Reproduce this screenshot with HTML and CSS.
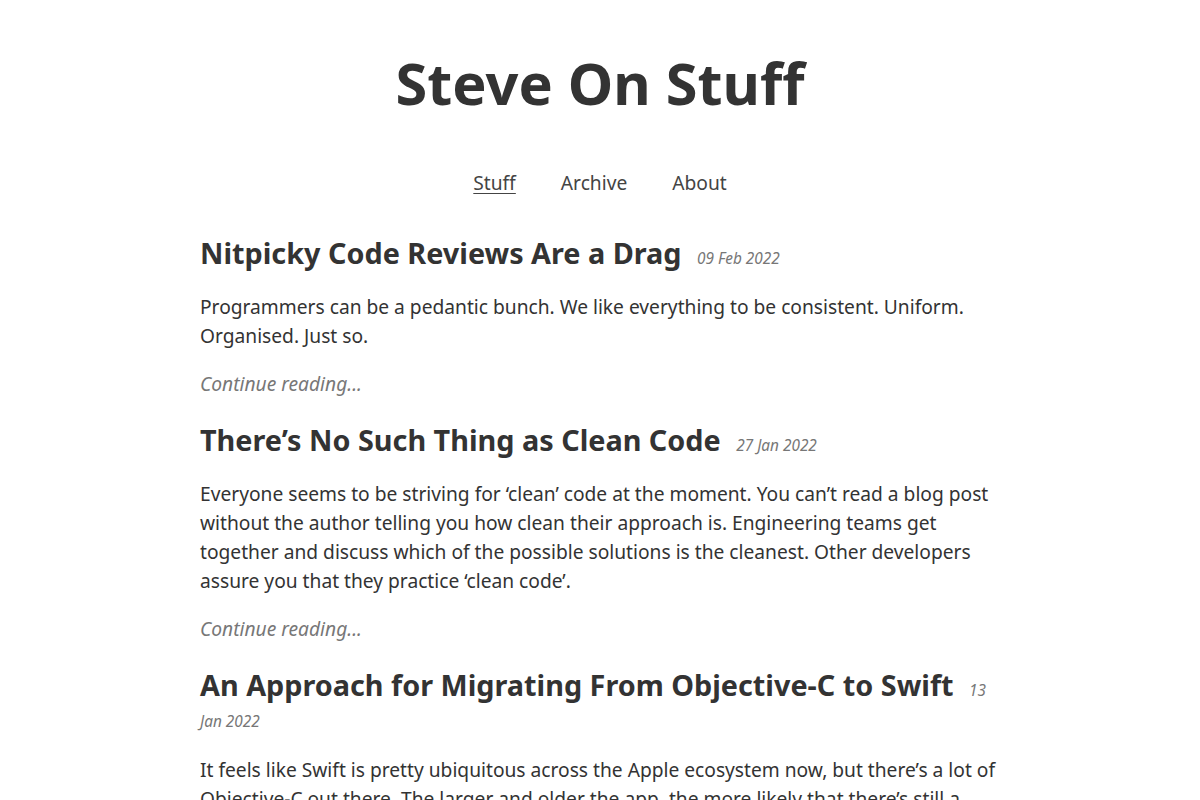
FILE: index.html
```html
<!DOCTYPE html>
<html lang="en">
<head>
<meta charset="utf-8">
<title>Steve On Stuff</title>
<link rel="stylesheet" href="styles.css">
</head>
<body>
<header class="site-header">
  <h1 class="site-title">Steve On Stuff</h1>
  <nav class="site-nav">
    <a class="nav-link current" href="#">Stuff</a>
    <a class="nav-link" href="#">Archive</a>
    <a class="nav-link" href="#">About</a>
  </nav>
</header>
<main class="posts">
  <article class="post">
    <h2 class="post-title">Nitpicky Code Reviews Are a Drag <span class="post-date">09 Feb 2022</span></h2>
    <p class="post-excerpt">Programmers can be a pedantic bunch. We like everything to be consistent. Uniform. Organised. Just so.</p>
    <p class="post-more"><a href="#">Continue reading...</a></p>
  </article>
  <article class="post">
    <h2 class="post-title">There’s No Such Thing as Clean Code <span class="post-date">27 Jan 2022</span></h2>
    <p class="post-excerpt">Everyone seems to be striving for ‘clean’ code at the moment. You can’t read a blog post without the author telling you how clean their approach is. Engineering teams get together and discuss which of the possible solutions is the cleanest. Other developers assure you that they practice ‘clean code’.</p>
    <p class="post-more"><a href="#">Continue reading...</a></p>
  </article>
  <article class="post">
    <h2 class="post-title">An Approach for Migrating From Objective-C to Swift <span class="post-date">13 Jan 2022</span></h2>
    <p class="post-excerpt">It feels like Swift is pretty ubiquitous across the Apple ecosystem now, but there’s a lot of Objective-C out there. The larger and older the app, the more likely that there’s still a significant amount of Objective-C code in the codebase.</p>
    <p class="post-more"><a href="#">Continue reading...</a></p>
  </article>
</main>
</body>
</html>
```
FILE: styles.css
```css
html, body {
  margin: 0;
  padding: 0;
  background: #ffffff;
}
body {
  font-family: "Noto Sans", "Open Sans", sans-serif;
  color: #333333;
  font-size: 19.2px;
  line-height: 29px;
}
.site-header {
  text-align: center;
  padding-top: 47px;
}
.site-title {
  margin: 0;
  font-size: 57.6px;
  line-height: 72px;
  font-weight: 700;
  color: #333333;
}
.site-nav {
  display: flex;
  justify-content: center;
  gap: 45px;
  margin-top: 49px;
}
.nav-link {
  color: #444444;
  text-decoration: none;
  font-size: 19.2px;
  line-height: 29px;
}
.nav-link.current {
  text-decoration: underline;
  text-underline-offset: 3px;
  text-decoration-thickness: 1px;
}
.posts {
  width: 800px;
  margin: 0 auto;
  padding-top: 40px;
}
.post-title {
  margin: 0 0 24px;
  font-size: 28.8px;
  line-height: 31px;
  font-weight: 700;
  color: #333333;
}
.post-date {
  font-size: 15.36px;
  line-height: 16px;
  font-weight: 400;
  font-style: italic;
  color: #777777;
  margin-left: 8px;
}
.post-excerpt {
  margin: 0;
}
.post-more {
  margin: 19px 0 26px;
}
.post-more a {
  color: #777777;
  font-style: italic;
  text-decoration: none;
}
```
